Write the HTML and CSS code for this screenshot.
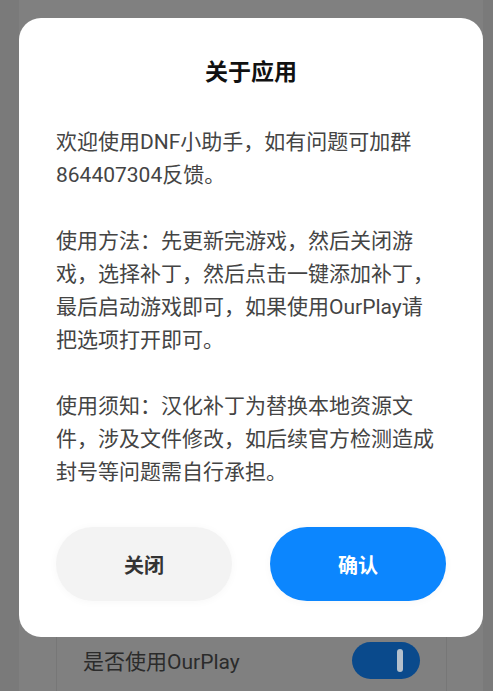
FILE: index.html
```html
<!DOCTYPE html>
<html lang="zh-CN">
<head>
  <meta charset="UTF-8" />
  <title>关于应用</title>
  <link rel="stylesheet" href="styles.css">
</head>
<body>
  <div class="page">
    <div class="card">
      <div class="setting-row">
        <span class="setting-label">是否使用OurPlay</span>
        <div class="switch"><div class="switch-thumb"></div></div>
      </div>
    </div>
  </div>

  <div class="overlay">
    <div class="dialog">
      <div class="dialog-title">关于应用</div>
      <div class="dialog-body">
        <p>欢迎使用DNF小助手，如有问题可加群864407304反馈。</p>
        <p>使用方法：先更新完游戏，然后关闭游戏，选择补丁，然后点击一键添加补丁，最后启动游戏即可，如果使用OurPlay请把选项打开即可。</p>
        <p>使用须知：汉化补丁为替换本地资源文件，涉及文件修改，如后续官方检测造成封号等问题需自行承担。</p>
      </div>
      <div class="dialog-actions">
        <button class="btn btn-cancel">关闭</button>
        <button class="btn btn-ok">确认</button>
      </div>
    </div>
  </div>
</body>
</html>
```

FILE: styles.css
```css
* { box-sizing: border-box; }

body {
  margin: 0;
  background-color: #7a7a7a;
  font-family: Roboto, "Noto Sans CJK SC", sans-serif;
  overflow: hidden;
}

.page {
  margin: 0 10px 0 19px;
  height: 691px;
  background-color: #808080;
  padding: 632px 36px 0 37px;
}

.card {
  height: 59px;
  border-left: 1px solid #777;
  border-right: 1px solid #777;
}

.setting-row {
  display: flex;
  align-items: center;
  justify-content: space-between;
  height: 56px;
  padding: 0 26px;
}

.setting-label {
  font-size: 21px;
  color: #2b2b2b;
}

.switch {
  width: 68px;
  height: 37px;
  border-radius: 19px;
  background-color: #0a4a8c;
  display: flex;
  align-items: center;
  justify-content: flex-end;
  padding-right: 17px;
}

.switch-thumb {
  width: 6px;
  height: 23px;
  border-radius: 3px;
  background-color: #b4c0cc;
}

.overlay {
  position: fixed;
  top: 0;
  left: 0;
  right: 0;
  bottom: 0;
  display: flex;
  justify-content: flex-start;
  align-items: flex-start;
  padding: 18px 0 0 19px;
}

.dialog {
  width: 464px;
  background: #fff;
  border-radius: 22px;
  padding: 40px 37px 36px;
}

.dialog-title {
  text-align: center;
  font-size: 23px;
  line-height: 30px;
  font-weight: bold;
  color: #111;
}

.dialog-body {
  max-width: 385px;
  margin-top: 38px;
  font-size: 21px;
  line-height: 33px;
  color: #444;
}

.dialog-body p {
  margin: 0 0 33px;
}

.dialog-body p:last-child {
  margin-bottom: 0;
}

.dialog-actions {
  display: flex;
  gap: 38px;
  margin-top: 38px;
}

.btn {
  flex: 1;
  height: 74px;
  border: none;
  border-radius: 37px;
  font-family: Roboto, "Noto Sans CJK SC", sans-serif;
  font-size: 20px;
  font-weight: bold;
  box-shadow: 0 1px 8px rgba(0, 0, 0, 0.035);
}

.btn-cancel {
  background-color: #f3f3f3;
  color: #333;
}

.btn-ok {
  background-color: #0c86fe;
  color: #fff;
}
```
